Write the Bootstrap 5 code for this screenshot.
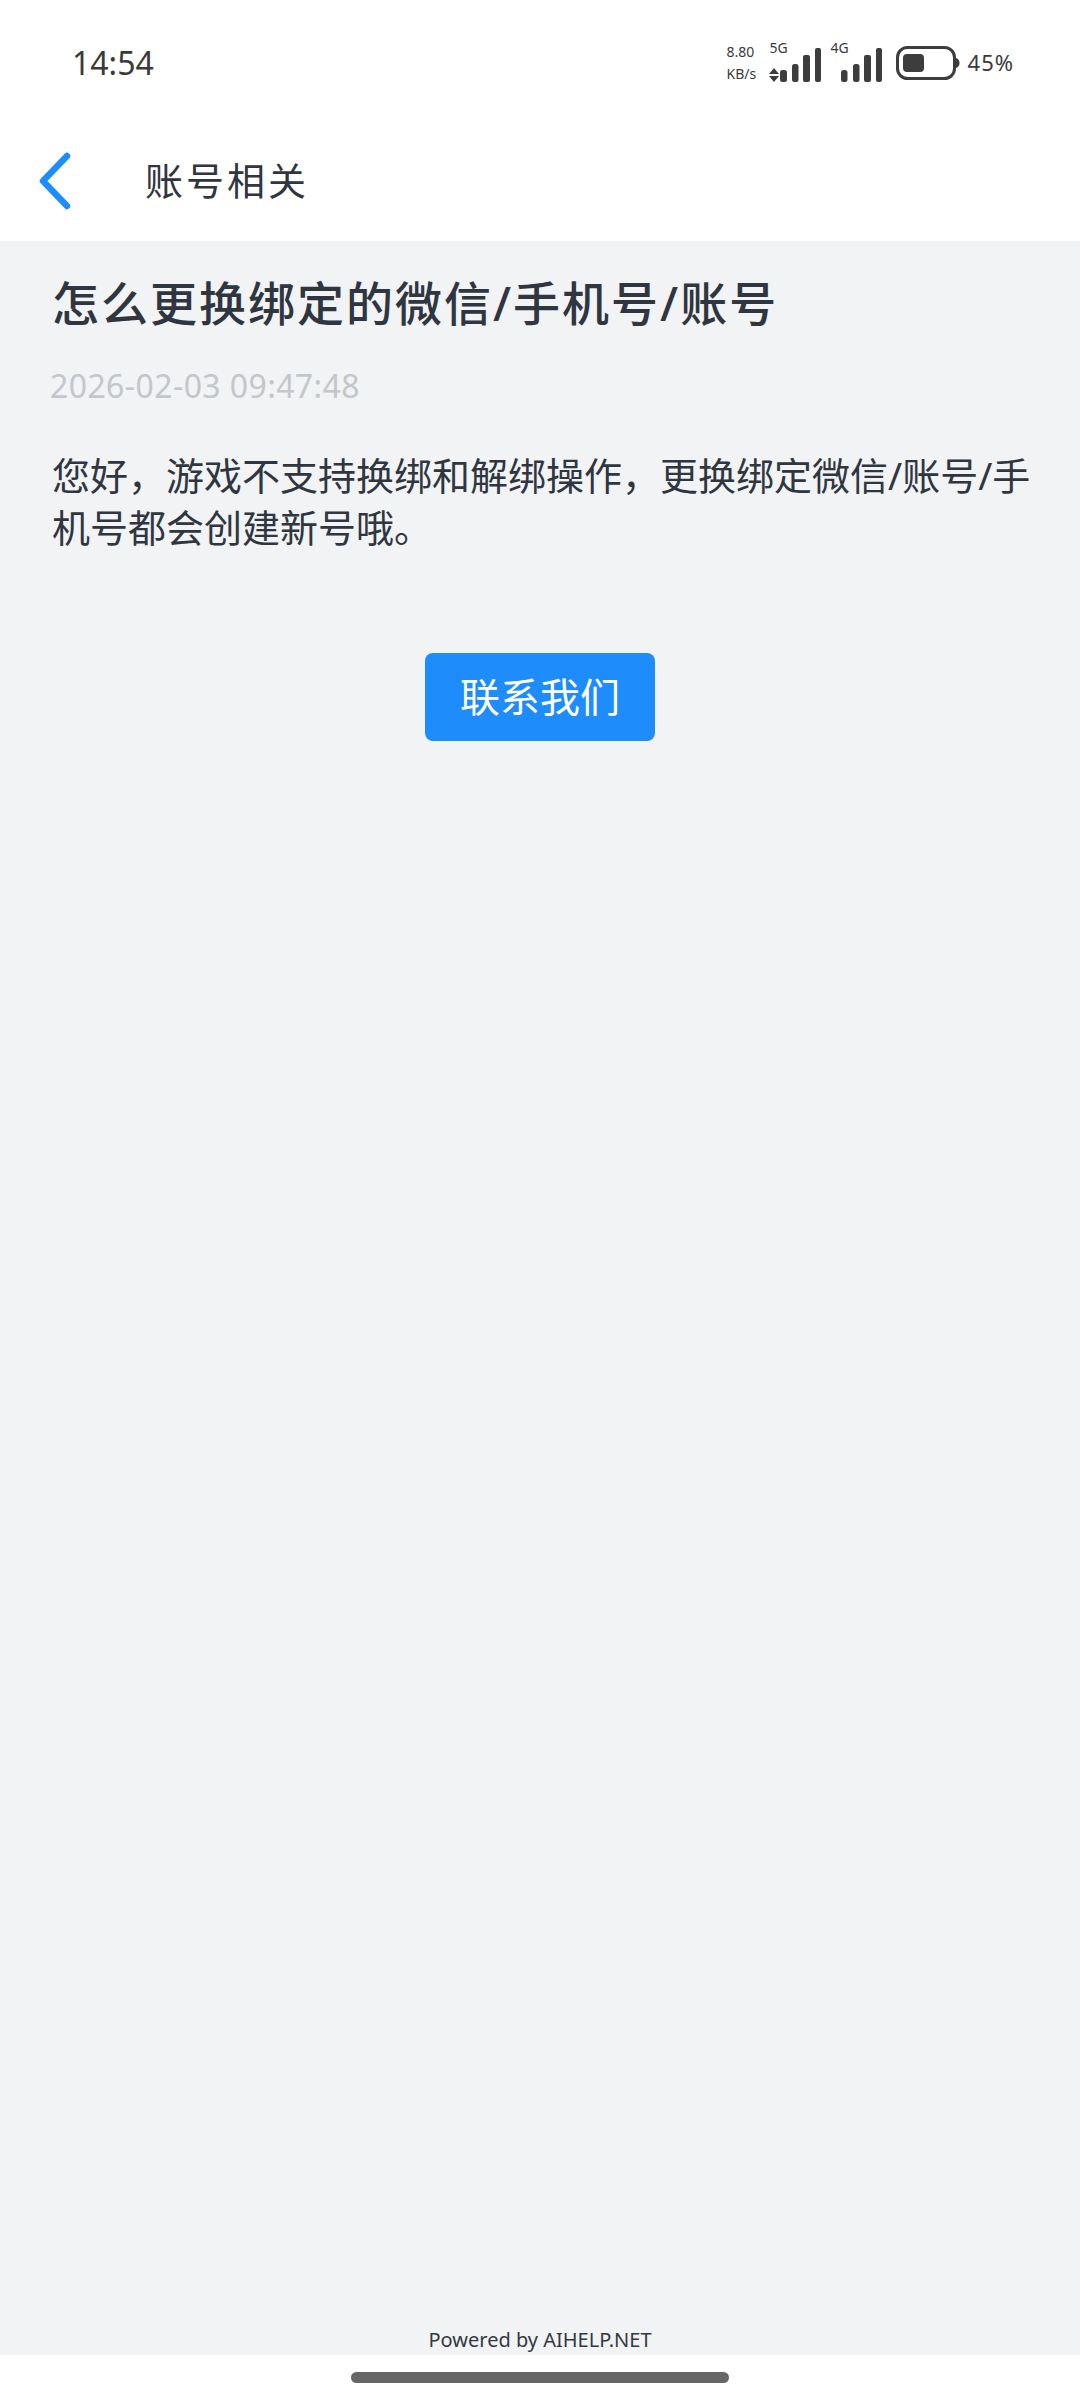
<!DOCTYPE html>
<html lang="zh-CN">
<head>
    <meta charset="UTF-8">
    <meta name="viewport" content="width=device-width, initial-scale=1.0">
    <title>账号相关</title>
    <link href="https://cdn.jsdelivr.net/npm/bootstrap@5.3.0/dist/css/bootstrap.min.css" rel="stylesheet">
    <style>
        body { font-family: "Noto Sans", "Noto Sans CJK SC", sans-serif; color: #2f3640; background: #fff; height: 2400px; }
        .status-row { height: 120px; padding: 46px 66px 0 72px; color: #3a3a3a; }
        .clock { font-size: 32px; line-height: 38px; margin-top: -2px; }
        .speed { font-size: 14px; line-height: 22px; width: 39px; margin-top: -5px; }
        .sig-wrap { position: relative; width: 55px; height: 36px; }
        .sig-wrap span { position: absolute; left: 4px; top: -7px; font-size: 14px; line-height: 18px; }
        .sig-wrap svg { display: block; }
        .sig-second { margin-left: 6px; }
        .batt-icon { margin-left: 14px; }
        .batt-pct { font-size: 22px; line-height: 32px; letter-spacing: 1px; }
        .nav-row { height: 121px; padding-left: 38px; }
        .nav-title { font-size: 38px; line-height: 50px; margin-left: 73px; margin-top: -2px; letter-spacing: 3px; }
        .page-body { background: #f1f3f5; }
        .answer-wrap { padding: 0 38px 0 52px; }
        .q-title { font-size: 47px; line-height: 62px; font-weight: 500; margin: 31px 0 0; letter-spacing: 2px; }
        .q-date { font-size: 32px; line-height: 40px; letter-spacing: .4px; color: #c3c6ca; margin: 32px 0 0 -2px; }
        .q-text { font-size: 38px; line-height: 52px; margin: 43px 0 0; }
        .contact-btn { background: #1e8cfa; color: #fff; width: 230px; height: 88px; font-size: 40px; line-height: 1; border: 0; border-radius: 8px; margin-top: 100px; }
        .powered { font-size: 20px; line-height: 28px; padding-bottom: 1px; color: #333a42; }
        .home-strip { height: 45px; padding-top: 17px; }
        .home-bar { width: 378px; height: 11px; background: #666; border-radius: 6px; }
    </style>
</head>
<body>
<div class="d-flex flex-column h-100">
    <div class="bg-white">
        <div class="status-row d-flex justify-content-between">
            <div class="clock">14:54</div>
            <div class="d-flex align-items-start">
                <div class="speed text-nowrap">8.80<br>KB/s</div>
                <div class="sig-wrap">
                    <span>5G</span>
                    <svg width="55" height="36" viewBox="0 0 55 36" fill="#3d3d3d">
                        <path d="M3 28l5-6 5 6zM3 30h10l-5 6z"/>
                        <rect x="14" y="24" width="7" height="12" rx="2.5"/>
                        <rect x="26" y="18" width="6.500" height="18" rx="2.5"/>
                        <rect x="37" y="9" width="7" height="27" rx="2"/>
                        <rect x="49" y="2" width="6" height="34" rx="2"/>
                    </svg>
                </div>
                <div class="sig-wrap sig-second">
                    <span>4G</span>
                    <svg width="55" height="36" viewBox="0 0 55 36" fill="#3d3d3d">
                        <rect x="14" y="24" width="6.500" height="12" rx="2.5"/>
                        <rect x="26" y="18" width="6.500" height="18" rx="2.5"/>
                        <rect x="37" y="9" width="7" height="27" rx="2"/>
                        <rect x="49" y="2" width="6" height="34" rx="2"/>
                    </svg>
                </div>
                <svg class="batt-icon" width="64" height="34" viewBox="0 0 64 34" fill="none">
                    <rect x="1.500" y="1.500" width="57" height="31" rx="10" stroke="#3d3d3d" stroke-width="3"/>
                    <rect x="7" y="8" width="21" height="18" rx="4" fill="#3d3d3d"/>
                    <path d="M60 12c2.500 1 3.500 2.500 3.500 5s-1 4-3.500 5z" fill="#3d3d3d"/>
                </svg>
                <div class="batt-pct ms-2">45%</div>
            </div>
        </div>
        <div class="nav-row d-flex align-items-center">
            <svg width="34" height="58" viewBox="0 0 34 58" fill="none">
                <path d="M29 4L5 29l24 25" stroke="#1e8cfa" stroke-width="6.500" stroke-linecap="round" stroke-linejoin="round"/>
            </svg>
            <div class="nav-title">账号相关</div>
        </div>
    </div>

    <div class="page-body flex-grow-1 d-flex flex-column">
        <div class="answer-wrap">
            <h1 class="q-title">怎么更换绑定的微信/手机号/账号</h1>
            <div class="q-date">2026-02-03 09:47:48</div>
            <p class="q-text">您好&#xFF0C;游戏不支持换绑和解绑操作&#xFF0C;更换绑定微信/账号/手机号都会创建新号哦。</p>
        </div>
        <div class="text-center">
            <button type="button" class="btn contact-btn">联系我们</button>
        </div>
        <div class="powered text-center mt-auto">Powered by AIHELP.NET</div>
    </div>

    <div class="home-strip bg-white d-flex justify-content-center">
        <div class="home-bar"></div>
    </div>
</div>
<script src="https://cdn.jsdelivr.net/npm/bootstrap@5.3.0/dist/js/bootstrap.bundle.min.js"></script>
</body>
</html>
